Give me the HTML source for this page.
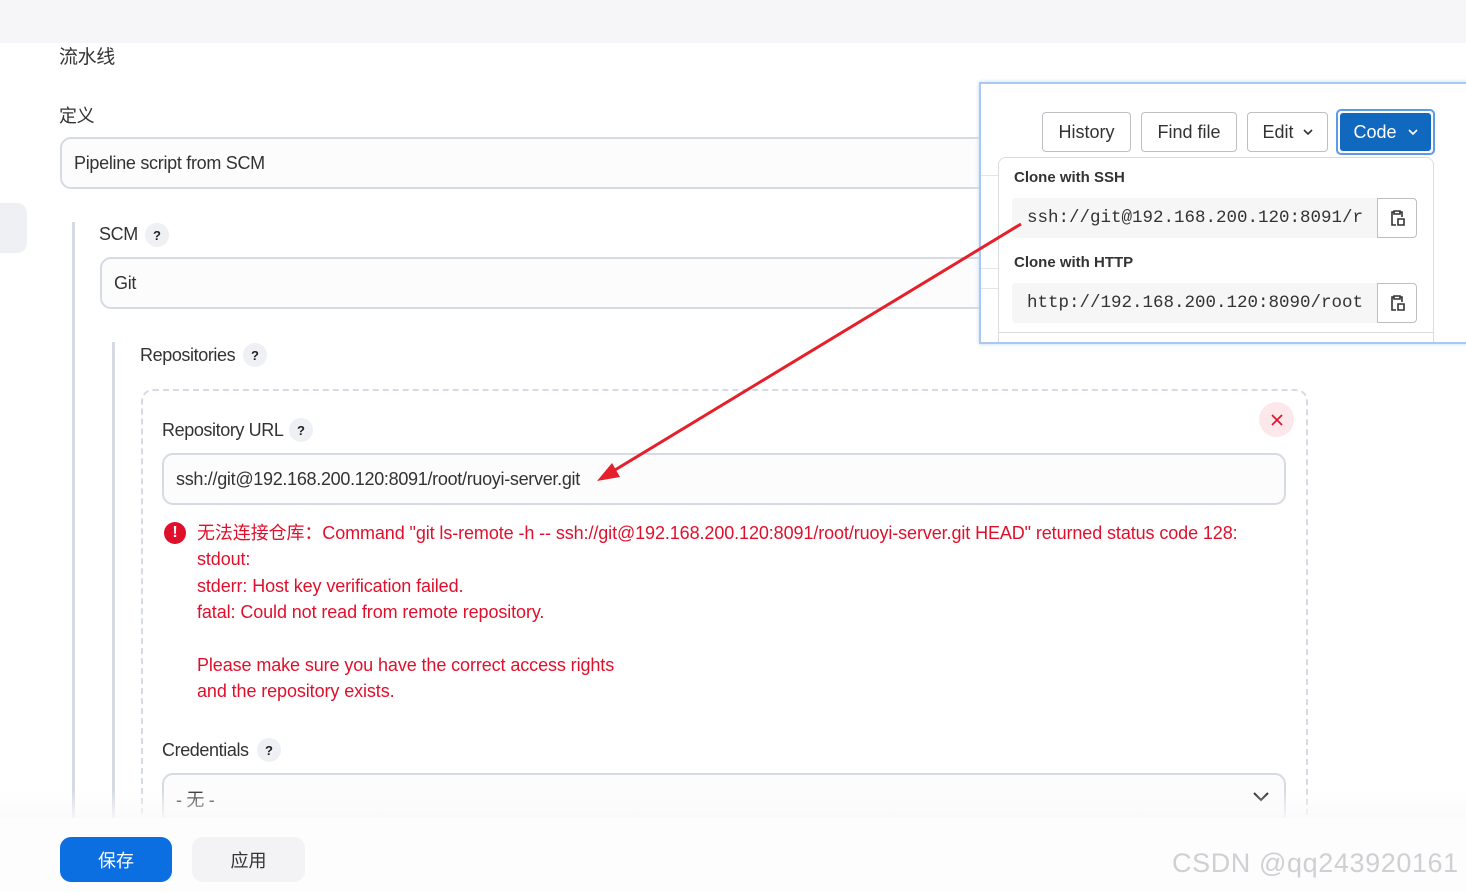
<!DOCTYPE html>
<html><head><meta charset="utf-8"><style>
*{box-sizing:border-box;margin:0;padding:0}
body{width:1466px;height:892px;overflow:hidden;background:#fff;font-family:"Liberation Sans","Noto Sans CJK SC",sans-serif;color:#1f1f2a;position:relative}
.a{position:absolute}
.top{left:0;top:0;width:1466px;height:43px;background:#f6f6f8}
.lbl{font-size:18px;color:#333;letter-spacing:-0.4px}
.inp{border:2px solid #d6dae3;border-radius:11px;background:#fcfcfd;font-size:18px;color:#333;padding-left:12px;display:flex;align-items:center;letter-spacing:-0.3px}
.q{width:24px;height:24px;border-radius:50%;background:#eef0f3;font-size:13px;font-weight:bold;display:flex;align-items:center;justify-content:center;color:#222}
.vl{background:#d6dae3;width:3px}
.err{color:#e0102c;font-size:18px;line-height:26.4px;letter-spacing:-0.1px}
.btn{border:1px solid #bfbfc3;border-radius:4px;background:#fff;font-size:18px;color:#333;display:flex;align-items:center;justify-content:center;height:40px;top:112px}
.mono{font-family:"Liberation Mono",monospace;font-size:17.5px;color:#333}
</style></head><body>
<div class="a top"></div>
<div class="a" style="left:0;top:203px;width:27px;height:50px;background:#eef0f3;border-radius:0 10px 10px 0"></div>
<div class="a lbl" style="left:59px;top:42px;font-size:19px">流水线</div>
<div class="a lbl" style="left:59px;top:102px">定义</div>
<div class="a inp" style="left:60px;top:137px;width:1247px;height:52px">Pipeline script from SCM</div>
<div class="a vl" style="left:72px;top:222px;height:600px"></div>
<div class="a lbl" style="left:99px;top:224px">SCM</div>
<div class="a q" style="left:145px;top:223px">?</div>
<div class="a inp" style="left:100px;top:257px;width:1207px;height:52px">Git</div>
<div class="a vl" style="left:112px;top:342px;height:480px"></div>
<div class="a lbl" style="left:140px;top:345px">Repositories</div>
<div class="a q" style="left:243px;top:343px">?</div>
<div class="a" style="left:141px;top:389px;width:1167px;height:460px;border:2px dashed #d6dae3;border-radius:12px"></div>
<div class="a lbl" style="left:162px;top:420px">Repository URL</div>
<div class="a q" style="left:289px;top:418px">?</div>
<div class="a" style="left:1259px;top:402px;width:35px;height:35px;border-radius:50%;background:#fce8ea;display:flex;align-items:center;justify-content:center"><svg width="12" height="12"><path d="M1 1l10 10M11 1L1 11" stroke="#e0102c" stroke-width="1.6"/></svg></div>
<div class="a inp" style="left:162px;top:453px;width:1124px;height:52px">ssh://git@192.168.200.120:8091/root/ruoyi-server.git</div>
<div class="a" style="left:164px;top:522px;width:22px;height:22px;border-radius:50%;background:#e0102c;color:#fff;font-weight:bold;font-size:16px;display:flex;align-items:center;justify-content:center">!</div>
<div class="a err" style="left:197px;top:520px;width:1100px">无法连接仓库：Command "git ls-remote -h -- ssh://git@192.168.200.120:8091/root/ruoyi-server.git HEAD" returned status code 128:<br>stdout:<br>stderr: Host key verification failed.<br>fatal: Could not read from remote repository.<br><br>Please make sure you have the correct access rights<br>and the repository exists.</div>
<div class="a lbl" style="left:162px;top:740px">Credentials</div>
<div class="a q" style="left:257px;top:738px">?</div>
<div class="a inp" style="left:162px;top:773px;width:1124px;height:52px">- 无 -</div>
<svg class="a" style="left:1252px;top:790px" width="18" height="14"><path d="M2 3l7 7 7-7" fill="none" stroke="#222" stroke-width="2"/></svg>
<div class="a" style="left:0;top:790px;width:1466px;height:30px;background:linear-gradient(rgba(255,255,255,0),rgba(250,250,251,.9))"></div>
<div class="a" style="left:0;top:818px;width:1466px;height:74px;background:#fdfdfd"></div>
<div class="a" style="left:60px;top:837px;width:112px;height:45px;border-radius:11px;background:#0b6fe2;color:#fff;font-size:18px;display:flex;align-items:center;justify-content:center">保存</div>
<div class="a" style="left:192px;top:837px;width:113px;height:45px;border-radius:11px;background:#f3f3f6;color:#333;font-size:18px;display:flex;align-items:center;justify-content:center">应用</div>
<div class="a" style="left:1172px;top:848px;font-size:27px;color:#d0d0d4;letter-spacing:0.6px">CSDN @qq243920161</div>
<!-- popup -->
<div class="a" style="left:979px;top:82px;width:500px;height:262px;background:#fff;border:2px solid #a9c9f2;box-shadow:0 0 4px #bcd6f6;overflow:hidden">
<div class="a" style="left:0;top:91px;width:18px;height:1px;background:#e4e4e8"></div>
<div class="a" style="left:0;top:184px;width:18px;height:1px;background:#e4e4e8"></div>
<div class="a" style="left:0;top:204px;width:18px;height:1px;background:#e4e4e8"></div>
<div class="a" style="left:17px;top:73px;width:436px;height:200px;border:1px solid #dcdcde;border-radius:8px;background:#fff"></div>
<div class="a" style="left:18px;top:248px;width:434px;height:1px;background:#dcdcde"></div>
</div>
<div class="a btn" style="left:1042px;width:89px">History</div>
<div class="a btn" style="left:1141px;width:96px">Find file</div>
<div class="a btn" style="left:1247px;width:81px">Edit<svg style="margin-left:9px" width="10" height="7"><path d="M1 1l4 4 4-4" fill="none" stroke="#333" stroke-width="1.6"/></svg></div>
<div class="a" style="left:1336px;top:109px;width:99px;height:46px;border:2px solid #5b9be8;border-radius:5px;padding:2px"><div style="background:#1068bf;height:100%;border-radius:3px;color:#fff;font-size:18px;display:flex;align-items:center;justify-content:center">Code<svg style="margin-left:11px" width="10" height="7"><path d="M1 1l4 4 4-4" fill="none" stroke="#fff" stroke-width="1.6"/></svg></div></div>
<div class="a" style="left:1014px;top:169px;font-size:15px;font-weight:bold;color:#333">Clone with SSH</div>
<div class="a mono" style="left:1012px;top:198px;width:366px;height:40px;background:#f6f6f7;border-radius:4px 0 0 4px;padding-left:15px;line-height:40px;overflow:hidden;white-space:nowrap">ssh://git@192.168.200.120:8091/r</div>
<div class="a" style="left:1377px;top:198px;width:40px;height:40px;border:1px solid #bfbfc3;border-radius:0 4px 4px 0;display:flex;align-items:center;justify-content:center"><svg width="16" height="18"><path d="M5 3H3v13h4M11 3h2v5M5 2h6v3H5z M9 10h6v6H9z" fill="none" stroke="#333" stroke-width="1.6"/></svg></div>
<div class="a" style="left:1014px;top:254px;font-size:15px;font-weight:bold;color:#333">Clone with HTTP</div>
<div class="a mono" style="left:1012px;top:283px;width:366px;height:40px;background:#f6f6f7;border-radius:4px 0 0 4px;padding-left:15px;line-height:40px;overflow:hidden;white-space:nowrap">http://192.168.200.120:8090/root</div>
<div class="a" style="left:1377px;top:283px;width:40px;height:40px;border:1px solid #bfbfc3;border-radius:0 4px 4px 0;display:flex;align-items:center;justify-content:center"><svg width="16" height="18"><path d="M5 3H3v13h4M11 3h2v5M5 2h6v3H5z M9 10h6v6H9z" fill="none" stroke="#333" stroke-width="1.6"/></svg></div>
<svg class="a" style="left:0;top:0" width="1466" height="892"><line x1="1021" y1="224" x2="610" y2="473" stroke="#e5202a" stroke-width="3"/><path d="M597 481L612 463L620 477Z" fill="#e5202a"/></svg>
</body></html>
